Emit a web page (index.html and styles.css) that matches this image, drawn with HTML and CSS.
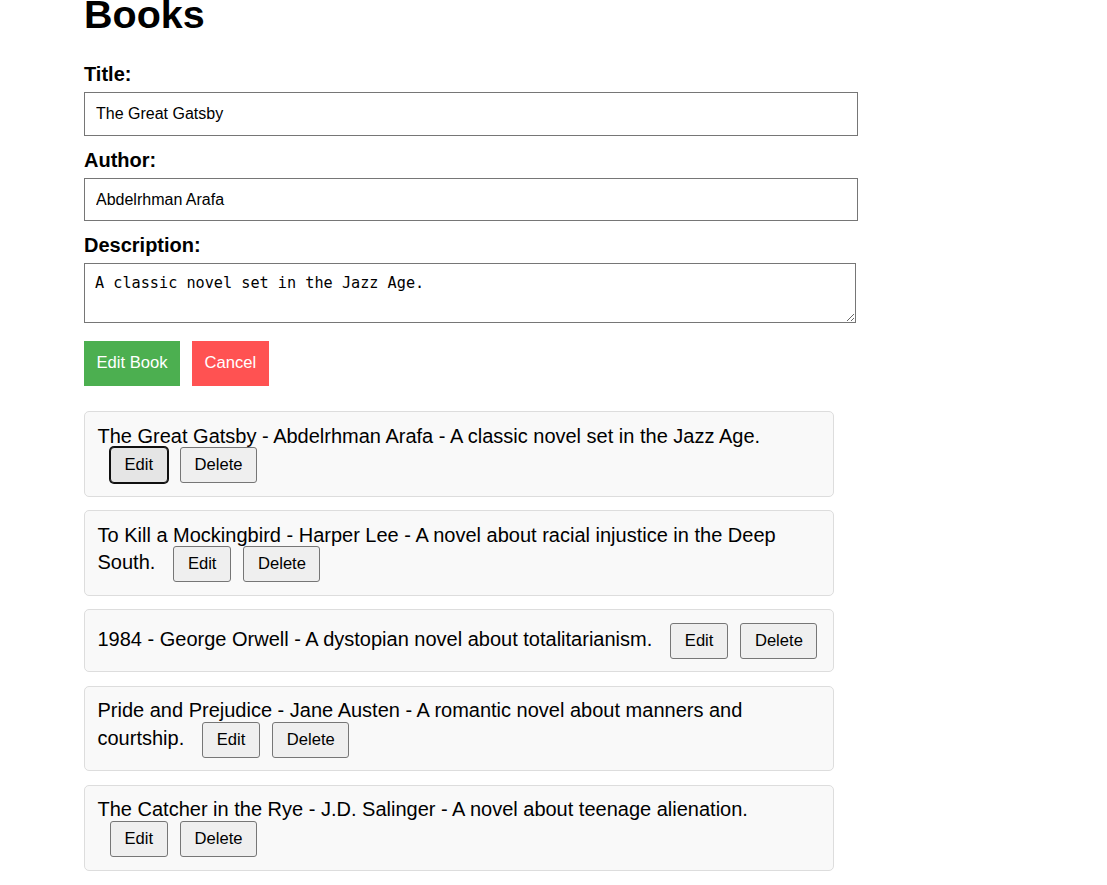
FILE: index.html
```html
<!DOCTYPE html>
<html lang="en">
<head>
<meta charset="utf-8">
<title>Books</title>
<link rel="stylesheet" href="styles.css">
</head>
<body>
<div class="app">
  <h1 class="page-title">Books</h1>
  <form class="book-form">
    <label class="field-label" for="title">Title:</label>
    <input class="text-input" id="title" type="text" value="The Great Gatsby">
    <label class="field-label" for="author">Author:</label>
    <input class="text-input" id="author" type="text" value="Abdelrhman Arafa">
    <label class="field-label" for="desc">Description:</label>
    <textarea class="text-area" id="desc">A classic novel set in the Jazz Age.</textarea>
    <div class="form-actions"><button type="button" class="btn-primary">Edit Book</button><button type="button" class="btn-cancel">Cancel</button></div>
  </form>
  <ul class="book-list">
    <li class="book-item">The Great Gatsby - Abdelrhman Arafa - A classic novel set in the Jazz Age. <span class="item-actions"><button class="item-btn is-focused">Edit</button><button class="item-btn">Delete</button></span></li>
    <li class="book-item">To Kill a Mockingbird - Harper Lee - A novel about racial injustice in the Deep South. <span class="item-actions"><button class="item-btn">Edit</button><button class="item-btn">Delete</button></span></li>
    <li class="book-item">1984 - George Orwell - A dystopian novel about totalitarianism. <span class="item-actions"><button class="item-btn">Edit</button><button class="item-btn">Delete</button></span></li>
    <li class="book-item">Pride and Prejudice - Jane Austen - A romantic novel about manners and courtship. <span class="item-actions"><button class="item-btn">Edit</button><button class="item-btn">Delete</button></span></li>
    <li class="book-item">The Catcher in the Rye - J.D. Salinger - A novel about teenage alienation. <span class="item-actions"><button class="item-btn">Edit</button><button class="item-btn">Delete</button></span></li>
  </ul>
</div>
</body>
</html>
```
FILE: styles.css
```css
html, body {
  margin: 0;
  padding: 0;
  background: #ffffff;
}
body {
  font-family: "Liberation Sans", Arial, sans-serif;
  color: #000;
  overflow: hidden;
}
.app {
  padding-left: 84px;
  width: 774px;
}
.page-title {
  font-size: 39.5px;
  font-weight: bold;
  line-height: 1.15;
  margin: -8px 0 26px;
}
.book-form {
  margin: 0;
}
.field-label {
  display: block;
  font-size: 20px;
  font-weight: bold;
  line-height: 22px;
  margin-bottom: 7px;
}
.text-input {
  display: block;
  box-sizing: border-box;
  width: 774px;
  height: 43.5px;
  padding: 0 11px;
  border: 1px solid #767676;
  border-radius: 0;
  font-family: "Liberation Sans", Arial, sans-serif;
  font-size: 16px;
  color: #000;
  margin: 0 0 13px;
}
.text-area {
  display: block;
  box-sizing: border-box;
  width: 772px;
  height: 60px;
  padding: 10px;
  border: 1px solid #767676;
  font-family: "DejaVu Sans Mono", monospace;
  font-size: 15.2px;
  color: #000;
  margin: 0 0 18px;
}
.form-actions {
  display: flex;
  margin-bottom: 25px;
}
.btn-primary,
.btn-cancel {
  font-family: "Liberation Sans", Arial, sans-serif;
  font-size: 16.6px;
  line-height: 18.7px;
  color: #fff;
  border: none;
  border-radius: 0;
  padding: 13px 12.5px;
}
.btn-primary {
  background: #4caf50;
}
.btn-cancel {
  background: #ff5252;
  margin-left: 12px;
}
.book-list {
  list-style: none;
  margin: 0;
  padding: 0;
}
.book-item {
  box-sizing: border-box;
  width: 750px;
  padding: 12.5px;
  border: 1px solid #dddddd;
  border-radius: 5px;
  background: #f9f9f9;
  font-size: 20px;
  line-height: 1.13;
  margin-bottom: 13.5px;
}
.item-actions {
  white-space: nowrap;
}
.item-btn {
  display: inline-block;
  margin-left: 12.5px;
  padding: 7px 13.5px;
  font-family: "Liberation Sans", Arial, sans-serif;
  font-size: 16.6px;
  line-height: 20px;
  color: #000;
  background: #efefef;
  border: 1px solid #767676;
  border-radius: 3px;
}
.item-btn.is-focused {
  background: #e5e5e5;
  border-color: #101010;
  box-shadow: 0 0 0 1px #101010;
  border-radius: 4px;
}
```
